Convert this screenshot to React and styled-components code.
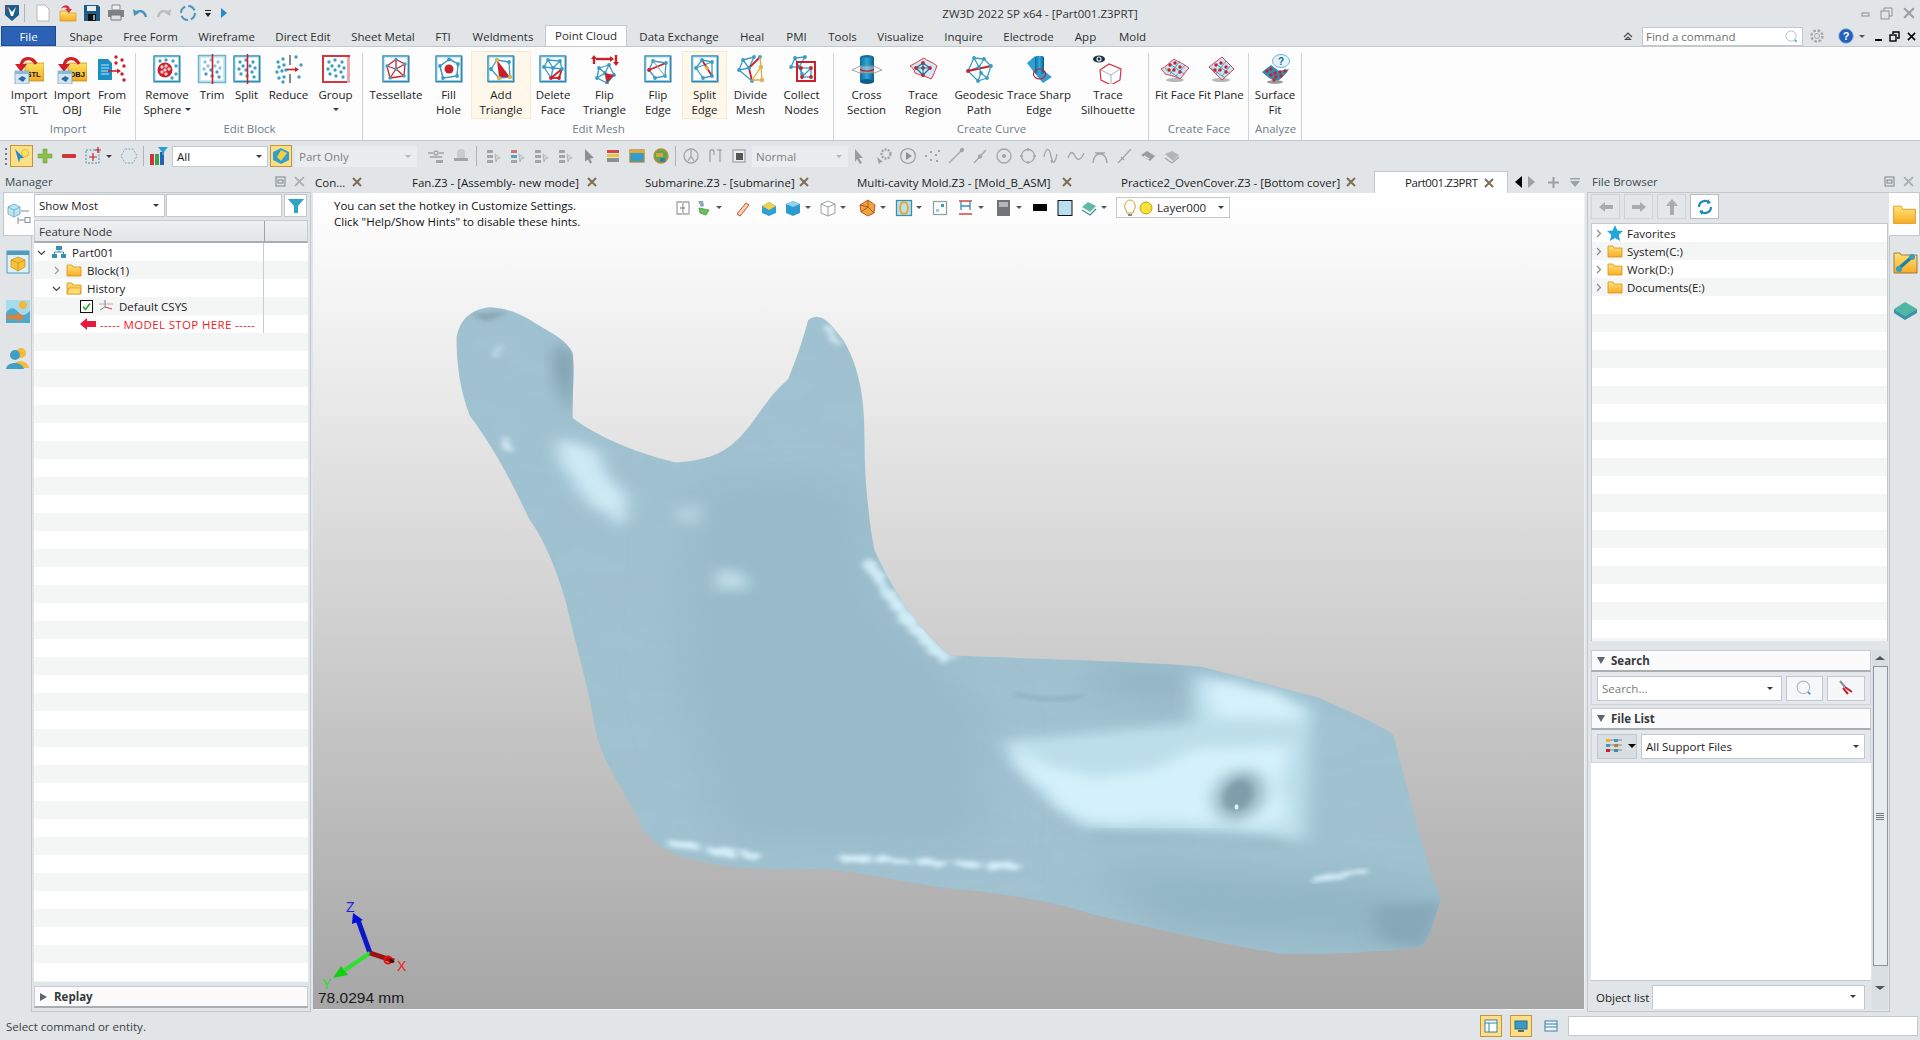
import React from 'react';
import styled, { createGlobalStyle } from 'styled-components';

const FONT = '"Open Sans", "Noto Sans", "Liberation Sans", sans-serif';
const BLUE = '#3a9cc4';
const RED = '#c9202c';
const GREY = '#a2a5a8';

const GlobalStyle = createGlobalStyle`
    html, body { margin: 0; padding: 0; height: 100%; overflow: hidden; }
    body { font-family: ${FONT}; font-size: 11.5px; color: #1c1c1c; background: #e1e5e8; }
    svg { display: block; }
`;

/* ---------- icon helpers ---------- */
function Ico({ s = 30, v = 30, children }) {
    return <svg width={s} height={s} viewBox={`0 0 ${v} ${v}`}>{children}</svg>;
}

function Frame({ c = '#3c8fb3' }) {
    return (
        <>
            <rect x="1.5" y="1.5" width="27" height="27" fill="#2f7ea3" />
            <rect x="1.5" y="1.5" width="26" height="26" fill={c} />
            <rect x="3" y="3" width="23.5" height="23.5" fill="#fff" stroke="#8ed3ea" />
        </>
    );
}

function Net({ p, e = [], hot = [], c = BLUE, r = 1.9, hotNodes = [] }) {
    return (
        <>
            {e.map(([a, b], i) => <line key={i} x1={p[a][0]} y1={p[a][1]} x2={p[b][0]} y2={p[b][1]} stroke={c} strokeWidth="1.3" />)}
            {hot.map(([a, b], i) => <line key={i} x1={p[a][0]} y1={p[a][1]} x2={p[b][0]} y2={p[b][1]} stroke={RED} strokeWidth="1.8" />)}
            {p.map(([x, y], i) => <circle key={i} cx={x} cy={y} r={r} fill={hotNodes.includes(i) ? RED : c} />)}
        </>
    );
}

function Dots({ p, c = '#3f9fc6' }) {
    return p.map(([x, y], i) => <circle key={i} cx={x} cy={y} r="1.7" fill={c} />);
}

const PENTA = [[15, 5.5], [24, 10], [23, 22], [9, 24], [6, 12], [15, 15]];
const PE = [[0, 1], [1, 2], [2, 3], [3, 4], [4, 0], [0, 5], [1, 5], [2, 5], [3, 5], [4, 5]];
const CLOUD = [[8, 8], [14, 6], [21, 8], [11, 12], [18, 12], [23, 14], [7, 15], [14, 16], [20, 18], [9, 20], [15, 22], [22, 23]];

function Folder({ s = 16, open }) {
    return (
        <svg width={s} height={s} viewBox="0 0 16 16">
            <path d="M1 3h5l1 2h8v9H1z" fill="url(#gFolder)" stroke="#d98f17" strokeWidth=".8" />
            {open && <path d="M1 14l2-6h12l-1 6z" fill="#ffdc72" stroke="#d98f17" strokeWidth=".6" />}
        </svg>
    );
}

const ImportBase = ({ label }) => (
    <Ico>
        <rect x="11" y="9" width="19" height="18" fill="url(#gGold)" stroke="#b98a12" strokeWidth=".7" />
        <text x="12.5" y="23" fontSize="7.5" fontWeight="700" fontFamily="Liberation Sans" fill="#111">{label}</text>
        <path d="M22 10C18 2 8 3 7 12" stroke="#d01f26" strokeWidth="3.2" fill="none" />
        <path d="M1 10h12l-6 8z" fill="#d01f26" />
        <rect x="1" y="17" width="14" height="13" fill="#d5e6f3" stroke="#6e97b5" strokeWidth=".7" />
        <rect x="1" y="17" width="14" height="3" fill="#8ab9da" />
        <path d="M4 25l4-3 4 2-3 4z" fill="#2f6ea3" />
    </Ico>
);
const ImportStl = () => <ImportBase label="STL" />;
const ImportObj = () => <ImportBase label="OBJ" />;
const FromFile = () => (
    <Ico>
        <path d="M1 5h10l4 4v17H1z" fill="#1b8fc4" />
        <path d="M4 11h8M4 14h8M4 17h7M4 20h8" stroke="#bfe6f5" />
        <path d="M11 17h12" stroke={RED} strokeWidth="1.6" />
        <path d="M20 14.5l4 2.5-4 2.5z" fill={RED} />
        <Dots c={RED} p={[[19, 3], [25, 6], [27, 12], [25, 20], [27, 26], [19, 9]]} />
    </Ico>
);
const RemoveSphere = () => (
    <Ico>
        <Frame />
        <Dots p={[[8, 7], [14, 6], [21, 7], [24, 12], [24, 20], [20, 24]]} />
        <circle cx="13" cy="16" r="7.5" fill={RED} />
        <Dots c="#f4c9c9" p={[[10, 13], [14, 12], [17, 15], [10, 18], [14, 20], [13, 16]]} />
    </Ico>
);
const Trim = () => (
    <Ico>
        <rect x="1.5" y="1.5" width="27" height="27" fill="#cfe8f1" stroke="#6fb4cf" strokeWidth="1.5" />
        <rect x="4" y="4" width="22" height="22" fill="#fff" />
        <Dots c="#8cc4dc" p={CLOUD.slice(0, 7)} />
        <Dots p={CLOUD.slice(7)} />
        <path d="M15.5 0v30" stroke={RED} strokeWidth="1.6" />
    </Ico>
);
const Split = () => (
    <Ico>
        <Frame />
        <Dots p={CLOUD} />
        <path d="M15.5 0v30" stroke={RED} strokeWidth="1.6" />
    </Ico>
);
const Reduce = () => (
    <Ico>
        <Dots p={[[4, 8], [9, 5], [5, 13], [10, 11], [3, 18], [8, 17], [12, 16], [5, 24], [10, 23], [9, 28], [22, 3], [27, 11], [25, 23]]} />
        <path d="M16 1v10M16 20v9" stroke="#6b6b6b" strokeWidth="1.6" />
        <path d="M13 15.5h10" stroke={RED} strokeWidth="1.6" />
        <path d="M21 13l4 2.5-4 2.5z" fill={RED} />
    </Ico>
);
const Group = () => (
    <Ico>
        <rect x="2" y="2" width="26" height="26" fill="#fff" stroke="#d2363f" strokeWidth="2" />
        <rect x="26" y="3" width="3" height="26" fill="#e9a9ac" />
        <Dots p={CLOUD} />
    </Ico>
);
const Tessellate = () => (
    <Ico>
        <Frame />
        <Net p={PENTA} c={RED} e={PE} r={0} />
        <Dots p={PENTA} />
    </Ico>
);
const FillHole = () => (
    <Ico>
        <Frame />
        <Net p={PENTA} e={PE.slice(0, 5)} />
        <path d="M6 12l9-6.5M24 10l-9-6M6 12l3 12M24 10l-1 12" stroke={BLUE} />
        <circle cx="15" cy="15" r="4.5" fill={RED} />
    </Ico>
);
const AddTriangle = () => (
    <Ico>
        <Frame />
        <Net p={[[11, 6], [23, 8], [24, 23], [13, 24], [5, 15]]} e={[[0, 1], [1, 2], [2, 3], [3, 4], [4, 0]]} hotNodes={[]} />
        <path d="M11 6l13 17H13z" fill={RED} />
        <circle cx="11" cy="6" r="2" fill="#e8b440" /><circle cx="24" cy="23" r="2" fill="#e8b440" /><circle cx="13" cy="24" r="2" fill="#e8b440" />
    </Ico>
);
const DeleteFace = () => (
    <Ico>
        <Frame />
        <Net p={[[10, 6], [22, 7], [24, 15], [21, 24], [13, 24], [6, 13], [15, 14]]} e={[[0, 1], [1, 2], [0, 5], [5, 4], [0, 6], [1, 6], [5, 6], [6, 4], [6, 2]]} hot={[[2, 3], [3, 4], [4, 2]]} hotNodes={[3, 4]} />
    </Ico>
);
const FlipTriangle = () => (
    <Ico>
        <path d="M4 10V4" stroke={RED} strokeWidth="2.4" /><path d="M1 5l3-4 3 4z" fill={RED} />
        <path d="M6 5h15" stroke={RED} strokeWidth="2.4" /><path d="M20 2l4 3-4 3z" fill={RED} />
        <path d="M26 1v8" stroke={RED} strokeWidth="2.4" /><path d="M23 8l3 4 3-4z" fill={RED} />
        <Net p={[[9, 14], [19, 11], [24, 21], [17, 29], [7, 24], [15, 19]]} e={[[0, 1], [1, 2], [2, 3], [3, 4], [4, 0], [0, 5], [1, 5], [4, 5], [3, 5]]} />
        <path d="M15 19l9 2-7 8z" fill={RED} />
    </Ico>
);
const FlipEdge = () => (
    <Ico>
        <Frame />
        <Net p={[[10, 7], [23, 9], [22, 22], [12, 24], [6, 16]]} e={[[0, 1], [1, 2], [2, 3], [3, 4], [4, 0]]} hot={[[1, 4]]} hotNodes={[4]} />
        <path d="M10 7l12 15" stroke="#a6a6a6" strokeWidth="1.2" />
    </Ico>
);
const SplitEdge = () => (
    <Ico>
        <Frame />
        <Net p={[[12, 6], [22, 8], [22, 22], [13, 24], [6, 14]]} e={[[0, 1], [1, 2], [2, 3], [3, 4], [4, 0], [4, 1]]} hot={[[0, 2]]} />
        <circle cx="17" cy="14" r="2" fill="#e8b440" />
    </Ico>
);
const DivideMesh = () => (
    <Ico>
        <Net p={[[7, 6], [18, 3], [25, 13], [16, 27], [3, 16], [13, 14], [26, 26], [24, 3]]} e={[[0, 1], [0, 4], [4, 3], [0, 5], [4, 5], [1, 5]]} hot={[[7, 5], [5, 3]]} />
        <path d="M24 3l1 10 1 13H16l9-13" stroke="#e0a93a" strokeWidth="1.3" fill="none" />
        <circle cx="25" cy="13" r="2" fill="#e8b440" /><circle cx="26" cy="26" r="2" fill="#e8b440" />
    </Ico>
);
const CollectNodes = () => (
    <Ico>
        <Net p={[[8, 4], [18, 3], [4, 13], [12, 13], [15, 20]]} e={[[0, 1], [0, 2], [2, 3], [0, 3], [1, 3], [3, 4]]} />
        <rect x="10" y="8" width="18" height="19" fill="none" stroke={RED} strokeWidth="2" />
        <Net p={[[14, 14], [24, 14], [15, 23], [24, 23]]} e={[[0, 1], [1, 3], [2, 3], [0, 2], [1, 2]]} hotNodes={[0, 1, 2, 3]} />
    </Ico>
);
const CrossSection = () => (
    <Ico>
        <ellipse cx="15" cy="3.5" rx="7" ry="2.5" fill="#1a6f9a" />
        <rect x="8" y="3.5" width="14" height="24" fill="url(#gCyl)" />
        <ellipse cx="15" cy="27.5" rx="7" ry="2.5" fill="#0c5f8b" />
        <path d="M0 16L8 12h14l8 4-8 3H8z" fill="#fff" fillOpacity=".35" stroke="#8b8b8b" strokeWidth=".8" />
        <path d="M8 15.5c4 2 10 2 14 0" stroke={RED} strokeWidth="1.4" fill="none" />
    </Ico>
);
const TraceRegion = () => (
    <Ico>
        <path d="M2 12C8 9 12 6 16 4c3 3 9 4 13 8-2 4-3 9-6 13-5-3-12-4-16-6C6 15 4 13 2 12z" fill="#cfeaf5" stroke="#e8333c" strokeWidth="1" />
        <Net p={[[15, 9], [22, 14], [15, 21], [8, 14], [15, 14]]} e={[[0, 1], [1, 2], [2, 3], [3, 0]]} c="#226f96" hotNodes={[0, 1, 2, 3, 4]} />
        <path d="M15 9v12M8 14h14" stroke="#226f96" />
    </Ico>
);
const Geodesic = () => (
    <Ico>
        <Net p={[[10, 4], [20, 5], [27, 12], [23, 24], [14, 27], [4, 17], [15, 13], [17, 19]]} e={[[0, 1], [1, 2], [2, 3], [3, 4], [4, 5], [5, 0], [0, 6], [1, 6], [6, 5], [6, 7], [7, 3], [7, 4]]} hot={[[5, 2]]} hotNodes={[5]} />
    </Ico>
);
const TraceSharp = () => (
    <Ico>
        <path d="M3 9l8-7c5 8 7 14 17 21l-9 6C13 22 8 16 3 9z" fill="#2d9fd0" />
        <rect x="11" y="2" width="9" height="18" fill="url(#gCyl)" rx="2" />
        <ellipse cx="15.5" cy="20" rx="6" ry="5" fill="none" stroke={RED} strokeWidth="1.2" />
    </Ico>
);
const TraceSilhouette = () => (
    <Ico>
        <ellipse cx="6" cy="5" rx="6" ry="3.6" fill="#16323f" />
        <ellipse cx="6" cy="5" rx="2.6" ry="2.6" fill="#e8f0f4" />
        <circle cx="6" cy="5" r="1.4" fill="#16323f" />
        <path d="M7 16l9-6 12 5-1 11-9 5-10-5z" fill="#fff" stroke="#d8323c" strokeWidth="1.2" />
        <path d="M8 16l10 5 9-6M18 21v9" stroke="#9bb2bf" strokeWidth="1" fill="none" />
    </Ico>
);
function Patch({ p }) {
    return (
        <Ico>
            <ellipse cx="15" cy="26" rx="9" ry="2" fill="#8a8a8a" opacity=".6" />
            <path d={p} fill="#c6e3f0" stroke="#ec3b44" strokeWidth="1" />
            <path d="M5 14l14 10M10 10l14 10M20 7L10 20M25 11l-9 11" stroke="#2f7fa6" strokeWidth=".7" />
            <Dots c={RED} p={[[10, 11], [15, 9], [20, 13], [14, 16], [20, 18], [9, 16]]} />
        </Ico>
    );
}
const FitFace = () => <Patch p="M1 15C6 13 10 8 14 5c4 3 9 4 15 9-4 4-6 8-9 11-5-3-12-4-15-5-1-2-3-4-4-5z" />;
const FitPlane = () => <Patch p="M3 13L16 3l12 12-12 11z" />;
const SurfaceFit = () => (
    <Ico>
        <ellipse cx="21" cy="7" rx="8.5" ry="6.5" fill="#e4f1f7" stroke="#6fb4cf" />
        <path d="M2 18l9-7 8 6 10-2c-2 4-6 8-11 12-6 0-12-5-16-9z" fill="#2d8fb5" />
        <ellipse cx="15" cy="28" rx="8" ry="1.8" fill="#999" />
        <Dots c={RED} p={[[7, 17], [11, 15], [15, 19], [20, 18], [25, 17], [11, 21], [16, 23], [21, 22], [14, 26]]} />
        <text x="18" y="11" fontSize="10" fontWeight="700" fontFamily="Liberation Sans" fill="#1d6f98">?</text>
    </Ico>
);

/* small toolbar glyphs */
function G({ children, s = 18 }) {
    return <svg width={s} height={s} viewBox="0 0 18 18" fill="none" stroke={GREY} strokeWidth="1.3">{children}</svg>;
}
const GREY_ICONS = {
    link: <G><path d="M1 6h5M12 6h5M3 10h12" /><circle cx="9" cy="6" r="2" /><path d="M9 13h7v3H9z" fill={GREY} stroke="none" /></G>,
    stamp: <G><path d="M5 11V6a4 4 0 018 0v5z" fill="#c9cccf" stroke="none" /><path d="M2 11h14v3H2z" fill={GREY} stroke="none" /></G>,
    list1: <G><path d="M3 3h6v3H3zM3 8h6v3H3zM3 13h6v3H3z" fill={GREY} stroke="none" /><path d="M11 7l5 4-3 1-1 3z" fill="#d8dadc" stroke={GREY} strokeWidth=".7" /></G>,
    list2: <G><path d="M3 3h6v3H3z" fill="#c77" stroke="none" /><path d="M3 8h6v3H3z" fill="#5a9fc0" stroke="none" /><path d="M3 13h6v3H3z" fill={GREY} stroke="none" /><path d="M11 7l5 4-3 1-1 3z" fill="#d8dadc" stroke={GREY} strokeWidth=".7" /></G>,
    cursor: <G><path d="M5 2l9 9-4 .5 2 4-2 1-2-4-3 2z" fill="#8d9093" stroke="none" /></G>,
    stack: <G><path d="M3 3h12v3H3z" fill="#d8453e" stroke="none" /><path d="M3 7h12v3H3z" fill="#e9c43f" stroke="none" /><path d="M3 11h12v4H3z" fill="#8d9093" stroke="none" /></G>,
    card: <G><rect x="2" y="3" width="14" height="12" fill="#2f9fd0" stroke="#b8872a" /><path d="M2 3h14v3H2z" fill="#e9a63f" stroke="none" /></G>,
    globe: <G><circle cx="9" cy="9" r="7" fill="#5aa75a" stroke="#c58a2a" /><path d="M4 6h7v4H4z" fill="#d9a23a" stroke="none" /><path d="M8 11h5v4H8z" fill="#2f7fa6" stroke="none" /></G>,
    clock: <G><circle cx="9" cy="9" r="7" /><path d="M9 3v6l-3 5M9 9l3 5" /></G>,
    hook: <G><path d="M4 15V5c0-3 4-3 4 0v3M14 15V3" /><path d="M11 3h5" /></G>,
    stop: <G><rect x="3" y="3" width="12" height="12" fill="#eee" /><rect x="6" y="6" width="7" height="7" fill="#555" stroke="none" /></G>,
    arrow: <G><path d="M4 2l8 9-4 0 3 5-2 1-3-5-2 3z" fill="#9a9da0" stroke="none" /></G>,
    gear: <G><circle cx="11" cy="7" r="4.5" strokeDasharray="2 1.2" strokeWidth="2.4" /><path d="M2 10l6 5-3 .5-1 2z" fill="#9a9da0" stroke="none" /></G>,
    play: <G><circle cx="9" cy="9" r="7.4" /><path d="M7 5l6 4-6 4z" fill="#8d9093" stroke="none" /></G>,
    points: <G><path d="M2 9h2M7 5h2M7 13h2M12 8h2M15 4h2M13 14h2" strokeWidth="1.8" /></G>,
    lineA: <G><path d="M2 16L15 3" /><circle cx="15" cy="3" r="1.5" fill={GREY} /></G>,
    lineB: <G><path d="M3 16L15 3" /><circle cx="9" cy="9.5" r="1.5" fill={GREY} /></G>,
    circleDot: <G><circle cx="9" cy="9" r="7" /><circle cx="9" cy="9" r="1.4" fill={GREY} /></G>,
    circlePts: <G><circle cx="9" cy="9" r="6.5" /><path d="M9 1v3M9 14v3M1 9h3M14 9h3" /></G>,
    wave: <G><path d="M1 10c2-10 5-10 7-1s4 8 6-2" /><path d="M8 13l1 3" /></G>,
    wave2: <G><path d="M1 11c3-8 5-6 7-2s5 6 9-3" /></G>,
    arch: <G><path d="M2 16c0-12 14-12 14 0M4 6h10" /></G>,
    lineC: <G><path d="M3 16L16 2" /><path d="M6 10l3 3" /></G>,
    solidA: <G><path d="M2 8l6-4 8 5-5 5z" fill="#9a9da0" stroke="none" /><path d="M5 9l5 3" stroke="#eee" /></G>,
    solidB: <G><path d="M2 7l7-3 7 4-6 6z" fill="#b2b5b8" stroke="none" /><path d="M2 11l7 5 7-6" /></G>,
};

/* ---------- layout ---------- */
const Shell = styled.div`
    width: 1920px;
    height: 1040px;
    display: flex;
    flex-direction: column;
    overflow: hidden;
    position: relative;
    background: #e1e5e8;
`;
const DefsSvg = styled.svg`
    position: absolute;
    width: 0;
    height: 0;
`;
const TitleRow = styled.div`
    height: 26px;
    display: flex;
    align-items: center;
    position: relative;
`;
const Quick = styled.div`
    display: flex;
    align-items: center;
`;
const QuickSlot = styled.div`
    width: ${p => p.$w || 24}px;
    margin-left: ${p => p.$ml || 0}px;
    display: flex;
    justify-content: center;
    align-items: center;
`;
const VBar = styled.div`
    width: 1px;
    height: ${p => p.$h || 18}px;
    margin-left: ${p => p.$ml || 0}px;
    background: #aeb4b8;
    flex: none;
`;
const AppTitle = styled.div`
    position: absolute;
    left: 0;
    right: 0;
    text-align: center;
    padding-left: 160px;
    box-sizing: border-box;
    color: #333;
`;
const WinTop = styled.div`
    margin-left: auto;
    display: flex;
    align-items: center;
    gap: 10px;
    padding-right: 5px;
`;
const MenuRow = styled.div`
    height: 20px;
    display: flex;
    align-items: flex-end;
    position: relative;
    z-index: 2;
`;
const FileTab = styled.div`
    width: 55px;
    height: 20px;
    margin-left: 1px;
    margin-right: 3px;
    box-sizing: border-box;
    background: #2b62b5;
    border: 1px solid #1c4a93;
    color: #fff;
    display: flex;
    align-items: center;
    justify-content: center;
`;
const MenuTab = styled.div`
    width: ${p => p.$w}px;
    height: ${p => (p.$active ? 21 : 20)}px;
    margin-left: ${p => p.$ml || 0}px;
    box-sizing: border-box;
    color: #2f2f2f;
    white-space: nowrap;
    display: flex;
    align-items: center;
    justify-content: center;
    padding-bottom: 1px;
    background: ${p => (p.$active ? '#fdfdfd' : 'transparent')};
    border: ${p => (p.$active ? '1px solid #c3c8cc' : '1px solid transparent')};
    border-bottom: none;
`;
const MenuRight = styled.div`
    margin-left: auto;
    height: 20px;
    display: flex;
    align-items: center;
    padding-right: 3px;
`;
const FindBox = styled.div`
    width: 161px;
    height: 19px;
    margin: 0 6px 0 9px;
    box-sizing: border-box;
    background: #fff;
    border: 1px solid #c3c8cc;
    color: #6f6f6f;
    display: flex;
    align-items: center;
    justify-content: space-between;
    padding: 0 4px 0 3px;
`;
const Ribbon = styled.div`
    height: 95px;
    box-sizing: border-box;
    background: #fdfdfd;
    border-top: 1px solid #c3c8cc;
    border-bottom: 1px solid #c3c8cc;
    display: flex;
`;
const RGroup = styled.div`
    width: ${p => p.$w}px;
    box-sizing: border-box;
    flex: none;
    display: flex;
    flex-direction: column;
    padding: 4px 0 0 ${p => p.$pl}px;
    position: relative;
    &::after {
        content: '';
        position: absolute;
        right: 0;
        top: 6px;
        bottom: 0;
        width: 1px;
        background: #d0d4d8;
    }
`;
const RItems = styled.div`
    display: flex;
    height: 68px;
`;
const RButton = styled.div`
    width: ${p => p.$w}px;
    flex: none;
    box-sizing: border-box;
    display: flex;
    flex-direction: column;
    align-items: center;
    padding-top: 1px;
    color: #222;
    line-height: 15px;
    white-space: nowrap;
    background: ${p => (p.$hot ? '#fff8ea' : 'transparent')};
    border: 1px solid ${p => (p.$hot ? '#f6ebcf' : 'transparent')};
`;
const RIcon = styled.div`
    height: 31px;
    margin-bottom: 3px;
    display: flex;
    align-items: center;
    justify-content: center;
`;
const RLine = styled.div`
    display: flex;
    align-items: center;
    gap: 3px;
    height: 15px;
`;
const RLabel = styled.div`
    text-align: center;
    color: #6d7f8c;
    margin-left: -${p => p.$pl}px;
    line-height: 16px;
    margin-top: 2px;
`;
const Caret = styled.span`
    display: inline-block;
    width: 0;
    height: 0;
    flex: none;
    border-left: ${p => p.$s || 3}px solid transparent;
    border-right: ${p => p.$s || 3}px solid transparent;
    border-top: ${p => p.$s || 3}px solid ${p => p.$c || '#3a3a3a'};
`;
const Toolbar = styled.div`
    height: 30px;
    display: flex;
    align-items: center;
    padding-left: 4px;
`;
const Grip = styled.div`
    width: 2px;
    height: 17px;
    margin-left: 1px;
    margin-right: 1px;
    background: repeating-linear-gradient(#6f7a82 0 2px, transparent 2px 5px);
`;
const Slot = styled.div`
    width: ${p => p.$w || 24}px;
    margin-left: ${p => p.$ml || 0}px;
    flex: none;
    display: flex;
    align-items: center;
    justify-content: center;
`;
const HotButton = styled.div`
    width: ${p => p.$w}px;
    height: 22px;
    margin-left: ${p => p.$ml || 0}px;
    flex: none;
    box-sizing: border-box;
    background: #ffdf85;
    border: 1px solid #c2953d;
    display: flex;
    align-items: center;
    justify-content: center;
`;
const Select = styled.div`
    width: ${p => p.$w}px;
    height: ${p => p.$h || 21}px;
    margin-left: ${p => p.$ml || 0}px;
    flex: none;
    box-sizing: border-box;
    background: ${p => (p.$off ? '#eaedef' : '#fff')};
    border: 1px solid ${p => (p.$off ? '#eaedef' : '#c3c8cc')};
    color: ${p => (p.$off ? '#7c7f82' : '#1c1c1c')};
    display: flex;
    align-items: center;
    justify-content: space-between;
    padding: 0 5px 0 ${p => (p.$off ? 3 : 4)}px;
`;
const Workspace = styled.div`
    flex: 1;
    min-height: 0;
    display: flex;
`;
const LeftDock = styled.div`
    width: 311px;
    flex: none;
    box-sizing: border-box;
    display: flex;
    flex-direction: column;
    padding-bottom: 28px;
`;
const DockHead = styled.div`
    height: 21px;
    flex: none;
    display: flex;
    align-items: center;
    justify-content: space-between;
    padding: 0 ${p => p.$pr || 6}px 0 ${p => p.$pl || 5}px;
    color: #40494f;
    font-size: 11.5px;
`;
const DockTools = styled.div`
    display: flex;
    align-items: center;
    gap: 8px;
`;
const DockBody = styled.div`
    flex: 1;
    min-height: 0;
    display: flex;
    padding-left: ${p => p.$pl || 0}px;
`;
const Rail = styled.div`
    width: 30px;
    flex: none;
    display: flex;
    flex-direction: column;
    position: relative;
    z-index: 1;
`;
const RailTab = styled.div`
    height: ${p => p.$h || 48}px;
    box-sizing: border-box;
    display: flex;
    align-items: center;
    justify-content: center;
    ${p => p.$active && `
        background: #fdfdfd;
        border: 1px solid #c3c8cc;
        ${p.$side === 'right' ? 'border-left: 1px solid #fdfdfd; margin-left: -1px;' : 'border-right: 1px solid #fdfdfd; margin-right: -1px;'}
        height: 44px;
    `}
`;
const Panel = styled.div`
    flex: 1;
    min-width: 0;
    box-sizing: border-box;
    margin-left: -2px;
    background: #e1e5e8;
    border: 1px solid #c3c8cc;
    padding: 1px 2px 3px;
    display: flex;
    flex-direction: column;
`;
const FilterRow = styled.div`
    height: 23px;
    flex: none;
    display: flex;
    gap: 1px;
    margin-bottom: 3px;
`;
const FilterBtn = styled.div`
    width: 23px;
    margin-left: 1px;
    box-sizing: border-box;
    background: #fff;
    border: 1px solid #c3c8cc;
    display: flex;
    align-items: center;
    justify-content: center;
`;
const TreeHead = styled.div`
    height: 23px;
    flex: none;
    display: flex;
    box-sizing: border-box;
    background: linear-gradient(#eef0f2, #e3e6e9);
    border: 1px solid #c8ccd0;
    border-bottom: 2px solid #a9aeb3;
`;
const HeadCell = styled.div`
    width: 230px;
    box-sizing: border-box;
    padding-left: 4px;
    border-right: 1px solid #9fa4a9;
    display: flex;
    align-items: center;
    color: #333;
`;
const TreeBody = styled.div`
    flex: 1;
    min-height: 0;
    background: repeating-linear-gradient(#fff 0 18px, #f4f5f5 18px 36px);
`;
const TreeRow = styled.div`
    height: 18px;
    width: ${p => p.$w || 230}px;
    box-sizing: border-box;
    display: flex;
    align-items: center;
    padding-left: ${p => p.$pl || 0}px;
    gap: ${p => p.$gap || 3}px;
    white-space: nowrap;
    border-right: ${p => (p.$line ? '1px solid #c8ccd0' : 'none')};
    color: ${p => p.$c || '#1c1c1c'};
    letter-spacing: ${p => p.$ls || 0}px;
`;
const Replay = styled.div`
    height: 22px;
    flex: none;
    margin-top: 4px;
    box-sizing: border-box;
    background: #fbfbfb;
    border: 1px solid #c8ccd0;
    border-bottom: 2px solid #a9aeb3;
    display: flex;
    align-items: center;
    gap: 7px;
    padding-left: 5px;
    font-weight: 700;
    color: #37393b;
`;
const SideTri = styled.span`
    width: 0;
    height: 0;
    border-top: 4px solid transparent;
    border-bottom: 4px solid transparent;
    border-left: 7px solid #5f656a;
`;
const DownTri = styled.span`
    width: 0;
    height: 0;
    border-left: 4px solid transparent;
    border-right: 4px solid transparent;
    border-top: 7px solid #5f656a;
`;
const Center = styled.div`
    width: 1272px;
    flex: none;
    margin-left: 2px;
    display: flex;
    flex-direction: column;
    padding-bottom: 30px;
`;
const TabStrip = styled.div`
    height: 22px;
    flex: none;
    display: flex;
    align-items: flex-end;
    position: relative;
`;
const DocTab = styled.div`
    width: ${p => p.$w}px;
    height: 22px;
    flex: none;
    box-sizing: border-box;
    display: flex;
    align-items: center;
    justify-content: space-between;
    padding: 0 ${p => p.$pr}px 0 ${p => p.$pl}px;
    white-space: nowrap;
    letter-spacing: ${p => (p.$active ? '-.45px' : 0)};
    background: ${p => (p.$active ? '#fff' : 'transparent')};
    border: ${p => (p.$active ? '1px solid #c3c8cc' : 'none')};
    border-bottom: none;
`;
const TabNav = styled.div`
    display: flex;
    align-items: center;
    height: 22px;
    padding-left: 7px;
    gap: 6px;
`;
const Viewport = styled.div`
    flex: 1;
    min-height: 0;
    position: relative;
    overflow: hidden;
    background: linear-gradient(#ffffff 0%, #a6a6a6 100%);
    border-bottom: 1px solid #f3f3f3;
    border-right: 1px solid #f0f0f0;
`;
const Hint = styled.div`
    position: absolute;
    left: 21px;
    top: 5px;
    line-height: 16px;
    color: #111;
`;
const ViewTools = styled.div`
    position: absolute;
    left: 361px;
    top: 4px;
    display: flex;
    align-items: center;
`;
const ViewSlot = styled.div`
    width: ${p => p.$w}px;
    flex: none;
    display: flex;
    align-items: center;
    gap: 3px;
`;
const LayerBox = styled.div`
    width: 114px;
    height: 21px;
    margin-left: 0;
    box-sizing: border-box;
    background: #fff;
    border: 1px solid #c3c8cc;
    display: flex;
    align-items: center;
    gap: 2px;
    padding: 0 5px 0 6px;
`;
const LayerName = styled.span`
    flex: 1;
    margin-left: 2px;
`;
const JawSvg = styled.svg`
    position: absolute;
    left: 117px;
    top: 97px;
`;
const Triad = styled.svg`
    position: absolute;
    left: 7px;
    top: 707px;
`;
const Scale = styled.div`
    position: absolute;
    left: 5px;
    top: 796px;
    font-family: "Liberation Sans", Arial, sans-serif;
    font-size: 15.5px;
    color: #1a1a1a;
`;
const RightDock = styled.div`
    flex: 1;
    margin-left: 2px;
    display: flex;
    flex-direction: column;
    padding-bottom: 28px;
`;
const RightPanel = styled.div`
    width: 303px;
    flex: none;
    box-sizing: border-box;
    border: 1px solid #c3c8cc;
    padding: 1px 1px 2px 3px;
    display: flex;
    flex-direction: column;
`;
const NavRow = styled.div`
    height: 25px;
    flex: none;
    display: flex;
    gap: 4px;
    margin-bottom: 4px;
`;
const NavBtn = styled.div`
    width: 29px;
    box-sizing: border-box;
    border: 1px solid #cfd3d6;
    background: ${p => (p.$on ? '#fff' : '#e4e7ea')};
    ${p => p.$on && 'border-color: #b7bcc0;'}
    display: flex;
    align-items: center;
    justify-content: center;
`;
const FileTree = styled.div`
    height: 418px;
    flex: none;
    box-sizing: border-box;
    background: repeating-linear-gradient(#fff 0 18px, #f4f5f5 18px 36px);
    border-top: 1px solid #c3c8cc;
    border-left: 1px solid #c3c8cc;
    border-right: 1px solid #c3c8cc;
`;
const Lower = styled.div`
    flex: 1;
    min-height: 0;
    display: flex;
    margin-top: 9px;
    gap: 1px;
`;
const LowerCol = styled.div`
    width: 280px;
    flex: none;
    display: flex;
    flex-direction: column;
`;
const SectionHead = styled.div`
    height: 22px;
    flex: none;
    box-sizing: border-box;
    background: #fbfbfb;
    border: 1px solid #c8ccd0;
    border-bottom: 2px solid #a9aeb3;
    display: flex;
    align-items: center;
    gap: 6px;
    padding-left: 5px;
    font-weight: 700;
    color: #37393b;
`;
const SectionBody = styled.div`
    height: ${p => p.$h}px;
    flex: none;
    box-sizing: border-box;
    display: flex;
    align-items: center;
    gap: 4px;
    padding: 0 5px;
    margin-bottom: ${p => p.$mb || 0}px;
    background: #e4e8ec;
    border: 1px solid #d0d4d8;
    border-top: none;
`;
const SearchBox = styled.div`
    width: 186px;
    height: 25px;
    box-sizing: border-box;
    background: #fff;
    border: 1px solid #c3c8cc;
    color: #7a7a7a;
    display: flex;
    align-items: center;
    justify-content: space-between;
    padding: 0 8px 0 4px;
`;
const SquareBtn = styled.div`
    width: 38px;
    height: 25px;
    box-sizing: border-box;
    background: #f6f7f8;
    border: 1px solid #c3c8cc;
    display: flex;
    align-items: center;
    justify-content: center;
`;
const ViewPicker = styled.div`
    width: 42px;
    height: 25px;
    box-sizing: border-box;
    background: #d9dee3;
    border: 1px solid #c3c8cc;
    display: flex;
    align-items: center;
    gap: 5px;
    padding-left: 7px;
`;
const ListArea = styled.div`
    flex: 1;
    min-height: 0;
    background: #fff;
    border-bottom: 1px solid #c3c8cc;
`;
const ObjectRow = styled.div`
    height: 28px;
    flex: none;
    display: flex;
    align-items: flex-end;
    padding-left: 5px;
`;
const ObjectLabel = styled.span`
    width: 56px;
    line-height: 22px;
`;
const ObjectSel = styled.div`
    width: 213px;
    height: 24px;
    box-sizing: border-box;
    background: #fff;
    border: 1px solid #c3c8cc;
    border-bottom: none;
    display: flex;
    align-items: flex-start;
    justify-content: flex-end;
    padding: 9px 8px 0 0;
`;
const ScrollBar = styled.div`
    width: 16px;
    flex: none;
    background: #d9dee3;
    display: flex;
    flex-direction: column;
    align-items: center;
`;
const ScrollEnd = styled.div`
    height: ${p => p.$h}px;
    flex: none;
    display: flex;
    align-items: center;
`;
const UpTri = styled.span`
    width: 0;
    height: 0;
    border-left: 5px solid transparent;
    border-right: 5px solid transparent;
    border-bottom: 4px solid #4f5559;
`;
const DownBig = styled.span`
    width: 0;
    height: 0;
    border-left: 5px solid transparent;
    border-right: 5px solid transparent;
    border-top: 4px solid #4f5559;
`;
const ScrollThumb = styled.div`
    width: 15px;
    height: 300px;
    flex: none;
    box-sizing: border-box;
    background: #e9ecef;
    border: 1px solid #8d969d;
    display: flex;
    align-items: center;
    justify-content: center;
`;
const ThumbGrip = styled.div`
    width: 8px;
    height: 7px;
    background: repeating-linear-gradient(#6f7a82 0 1px, transparent 1px 2px);
`;
const StatusBar = styled.div`
    position: absolute;
    left: 0;
    right: 0;
    bottom: 0;
    height: 28px;
    display: flex;
    align-items: center;
    padding: 0 2px 0 6px;
    color: #3b4043;
`;
const StatusIcons = styled.div`
    margin-left: auto;
    display: flex;
    align-items: center;
    gap: 8px;
`;
const StatusBtn = styled.div`
    width: 22px;
    height: 22px;
    box-sizing: border-box;
    display: flex;
    align-items: center;
    justify-content: center;
    ${p => p.$on && 'background: #ffdf85; border: 1px solid #c2953d;'}
`;
const StatusField = styled.div`
    width: 350px;
    height: 20px;
    margin-left: 6px;
    box-sizing: border-box;
    background: #fff;
    border: 1px solid #c3c8cc;
`;

/* ---------- data ---------- */
const MENU = [
    ['Shape', 54], ['Free Form', 75], ['Wireframe', 77], ['Direct Edit', 76], ['Sheet Metal', 84], ['FTI', 36], ['Weldments', 84],
    ['Point Cloud', 82, true], ['Data Exchange', 100], ['Heal', 46], ['PMI', 43], ['Tools', 49], ['Visualize', 67], ['Inquire', 59], ['Electrode', 71], ['App', 43], ['Mold', 51],
];

const GROUPS = [
    { label: 'Import', w: 136, pl: 8, items: [
        { t: ['Import', 'STL'], w: 42, I: ImportStl }, { t: ['Import', 'OBJ'], w: 44, I: ImportObj }, { t: ['From', 'File'], w: 36, I: FromFile },
    ] },
    { label: 'Edit Block', w: 227, pl: 4, items: [
        { t: ['Remove', 'Sphere'], w: 54, I: RemoveSphere, caret: true }, { t: ['Trim'], w: 36, I: Trim }, { t: ['Split'], w: 33, I: Split }, { t: ['Reduce'], w: 51, I: Reduce }, { t: ['Group', ''], w: 43, I: Group, caret: true },
    ] },
    { label: 'Edit Mesh', w: 471, pl: 3, items: [
        { t: ['Tessellate'], w: 60, I: Tessellate }, { t: ['Fill', 'Hole'], w: 45, I: FillHole }, { t: ['Add', 'Triangle'], w: 60, I: AddTriangle, hot: true }, { t: ['Delete', 'Face'], w: 44, I: DeleteFace },
        { t: ['Flip', 'Triangle'], w: 59, I: FlipTriangle }, { t: ['Flip', 'Edge'], w: 48, I: FlipEdge }, { t: ['Split', 'Edge'], w: 45, I: SplitEdge, hot: true }, { t: ['Divide', 'Mesh'], w: 47, I: DivideMesh }, { t: ['Collect', 'Nodes'], w: 55, I: CollectNodes },
    ] },
    { label: 'Create Curve', w: 315, pl: 4, items: [
        { t: ['Cross', 'Section'], w: 57, I: CrossSection }, { t: ['Trace', 'Region'], w: 56, I: TraceRegion }, { t: ['Geodesic', 'Path'], w: 56, I: Geodesic }, { t: ['Trace Sharp', 'Edge'], w: 64, I: TraceSharp }, { t: ['Trace', 'Silhouette'], w: 74, I: TraceSilhouette },
    ] },
    { label: 'Create Face', w: 100, pl: 2, items: [
        { t: ['Fit Face'], w: 48, I: FitFace }, { t: ['Fit Plane'], w: 44, I: FitPlane },
    ] },
    { label: 'Analyze', w: 53, pl: 4, items: [{ t: ['Surface', 'Fit'], w: 44, I: SurfaceFit }] },
];

const DOC_TABS = [
    { t: 'Con...', w: 59, pl: 2, pr: 10 },
    { t: 'Fan.Z3 - [Assembly- new mode]', w: 234, pl: 40, pr: 9 },
    { t: 'Submarine.Z3 - [submarine]', w: 212, pl: 39, pr: 9 },
    { t: 'Multi-cavity Mold.Z3 - [Mold_B_ASM]', w: 263, pl: 39, pr: 9 },
    { t: 'Practice2_OvenCover.Z3 - [Bottom cover]', w: 293, pl: 40, pr: 18 },
    { t: 'Part001.Z3PRT', w: 134, pl: 30, pr: 13, active: true },
];

/* ---------- small pieces ---------- */
const CloseX = ({ c = '#7d6f55', s = 10, w = 2 }) => (
    <svg width={s} height={s} viewBox="0 0 10 10"><path d="M1 1l8 8M9 1l-8 8" stroke={c} strokeWidth={w} /></svg>
);
const Chevron = ({ open, c = '#444' }) => (
    <svg width="9" height="9" viewBox="0 0 9 9" fill="none" stroke={c} strokeWidth="1.2">
        <path d={open ? 'M1 3l3.5 3.5L8 3' : 'M3 1l3.5 3.5L3 8'} />
    </svg>
);
const Glass = ({ s = 14 }) => (
    <svg width={s} height={s} viewBox="0 0 14 14" fill="none">
        <circle cx="6.5" cy="6.5" r="5.5" stroke="#b8bcbf" />
        <path d="M10.5 10.5l2 2" stroke="#4b9cc0" strokeWidth="1.6" />
    </svg>
);
const DockGlyphs = () => (
    <DockTools>
        <svg width="11" height="11" viewBox="0 0 11 11" fill="none" stroke="#7c8287"><rect x="1" y="1" width="9" height="9" /><rect x="3" y="4" width="5" height="3" /></svg>
        <CloseX c="#a9aeb2" s={11} w={1.6} />
    </DockTools>
);
const Arrow = ({ dir = 'left', c = '#a8acaf' }) => (
    <svg width="16" height="16" viewBox="0 0 16 16">
        {dir === 'left' && <path d="M1 8l6-5v3h8v4H7v3z" fill={c} />}
        {dir === 'right' && <path d="M15 8l-6-5v3H1v4h8v3z" fill={c} />}
        {dir === 'up' && <path d="M8 0l6 7h-4v9H6V7H2z" fill={c} />}
    </svg>
);

const VIEW_TOOLS = [
    { w: 21, g: <G><path d="M8 3H3v12h5M9 3h6v12H9z" /><path d="M6 9h5" stroke="#888" /></G> },
    { w: 39, c: 1, g: <G><path d="M3 2l5 0 1 5-3 1z" fill="#8ab" stroke="none" /><path d="M4 9l10 2-3 5-6-2z" fill="#6cc05a" stroke="#3e9a3e" strokeWidth=".8" /></G> },
    { w: 26, g: <G><path d="M3 15l9-11 3 2-9 11z" fill="#f0d9b0" stroke="#d8453e" strokeWidth="1" /></G> },
    { w: 24, g: <G><path d="M9 3l7 4v7l-7 3-7-3V7z" fill="#30a0d2" stroke="none" /><path d="M9 3l7 4-7 4-7-4z" fill="#f2d04a" stroke="none" /></G> },
    { w: 35, c: 1, g: <G><path d="M9 2l7 3v9l-7 3-7-3V5z" fill="#2d9bd0" stroke="none" /><path d="M9 2l7 3-7 3-7-3z" fill="#8ed3ea" stroke="none" /></G> },
    { w: 40, c: 1, g: <G><path d="M9 2l7 3v9l-7 3-7-3V5zM2 5l7 3 7-3M9 8v9" stroke="#9aa0a5" strokeWidth="1" /></G> },
    { w: 36, c: 1, g: <G><path d="M9 1l7 5-1 8-6 3-7-4-1-7z" fill="#eda43a" stroke="#b2491f" strokeWidth=".9" /><path d="M9 1v7l6 6M9 8L2 13M9 8L1 6" stroke="#b2491f" strokeWidth=".9" /></G> },
    { w: 36, c: 1, g: <G><rect x="1.5" y="1.5" width="15" height="15" fill="#bde0ee" stroke="#3a8db3" /><ellipse cx="9" cy="9" rx="4" ry="6" stroke="#e8a830" strokeWidth="2" /></G> },
    { w: 26, g: <G><rect x="2.5" y="2.5" width="13" height="13" fill="#fff" stroke="#9aa0a5" /><path d="M10 5h3v3h-3z" fill="#3a9cc4" stroke="none" /><path d="M5 10h3v3H5z" fill="#9ccde0" stroke="none" /></G> },
    { w: 38, c: 1, g: <G><path d="M2 2h13M2 15h13" stroke="#d8453e" strokeWidth="1.6" /><path d="M4 2v9M13 2v9M4 7h9" stroke="#3a8db3" /></G> },
    { w: 36, c: 1, g: <G><rect x="2" y="1" width="13" height="16" fill="#707478" stroke="none" /><rect x="4" y="3" width="9" height="5" fill="#b4b8bc" stroke="none" /></G> },
    { w: 25, g: <G><rect x="2" y="5" width="14" height="7" fill="#000" stroke="none" /></G> },
    { w: 24, g: <G><rect x="2" y="1.5" width="14" height="15" fill="#b9dff0" stroke="#111" strokeWidth="1" /></G> },
    { w: 36, c: 1, g: <G><path d="M2 8l6-5 8 4-6 6z" fill="#62b8a8" stroke="none" /><path d="M2 11l8 5 6-6" stroke="#3f8d96" /></G> },
];

const JAW = 'M40 110C45 70 60 45 90 40C120 42 140 60 150 68C170 90 205 110 215 145C218 180 215 230 215 295C250 335 300 370 370 398C410 395 440 380 460 350C490 310 500 260 540 205C555 150 565 100 570 70C585 50 600 65 625 120C650 190 655 260 655 340C655 430 660 520 670 600C700 700 740 790 785 843C900 850 1050 855 1160 868C1220 890 1300 925 1340 940C1390 975 1430 1000 1452 1025C1470 1130 1490 1250 1510 1350L1525 1405C1515 1440 1510 1490 1495 1515C1440 1525 1340 1535 1280 1530C1200 1510 1100 1475 1000 1440C950 1415 900 1400 820 1385C740 1375 680 1350 600 1335C540 1335 500 1340 430 1325C380 1310 340 1290 320 1240C300 1170 260 1090 250 1020C240 920 220 820 205 720C190 640 170 570 150 530C120 430 90 350 60 290C45 230 40 170 40 110Z';

function Jaw() {
    return (
        <JawSvg width="1040" height="680" viewBox="0 0 1568 1568" preserveAspectRatio="none">
            <defs>
                <clipPath id="jawClip"><path d={JAW} /></clipPath>
                <filter id="b4" x="-50%" y="-50%" width="200%" height="200%"><feGaussianBlur stdDeviation="5" /></filter>
                <filter id="b14" x="-50%" y="-50%" width="200%" height="200%"><feGaussianBlur stdDeviation="14" /></filter>
                <filter id="b40" x="-50%" y="-50%" width="200%" height="200%"><feGaussianBlur stdDeviation="40" /></filter>
                <filter id="rough" x="-40%" y="-40%" width="180%" height="180%">
                    <feTurbulence type="fractalNoise" baseFrequency=".02" numOctaves="2" seed="4" result="n" />
                    <feDisplacementMap in="SourceGraphic" in2="n" scale="34" xChannelSelector="R" yChannelSelector="G" />
                    <feGaussianBlur stdDeviation="13" />
                </filter>
                <filter id="roughFine" x="-40%" y="-40%" width="180%" height="180%">
                    <feTurbulence type="fractalNoise" baseFrequency=".05" numOctaves="2" seed="9" result="n" />
                    <feDisplacementMap in="SourceGraphic" in2="n" scale="22" xChannelSelector="R" yChannelSelector="G" />
                    <feGaussianBlur stdDeviation="5" />
                </filter>
                <filter id="mottle" x="0" y="0" width="100%" height="100%">
                    <feTurbulence type="fractalNoise" baseFrequency=".012 .02" numOctaves="4" seed="7" />
                    <feColorMatrix values="0 0 0 0 .35  0 0 0 0 .5  0 0 0 0 .58  1.6 0 0 0 -.62" />
                </filter>
            </defs>
            <path d={JAW} fill="#a0c2d1" />
            <g clipPath="url(#jawClip)">
                <rect width="1568" height="1568" filter="url(#mottle)" opacity=".3" />
                {/* broad soft shading */}
                <path d="M400 440L640 440L670 720L830 960L830 1290L440 1270L380 900Z" fill="#97b9c8" filter="url(#b40)" />
                <path d="M1000 870L1160 870L1140 950L1000 930Z" fill="#8fb0bf" filter="url(#b40)" />
                <path d="M1000 1320L1520 1370L1530 1530L1100 1480Z" fill="#93b6c4" filter="url(#b40)" />
                <path d="M1420 1420L1530 1410L1500 1520L1430 1500Z" fill="#86a8b6" filter="url(#b14)" />
                <path d="M194 120L216 150L216 290L196 230C185 190 185 150 194 120Z" fill="#7d9cab" filter="url(#b14)" />
                <path d="M62 56L120 50L85 72Z" fill="#86a4b2" filter="url(#b4)" />
                {/* highlights */}
                <path d="M860 1040L1150 1000L1150 880L1330 960L1320 1270L990 1240L930 1170Z" fill="#bcdfeb" filter="url(#b14)" />
                <path d="M1170 905C1230 905 1295 940 1315 985L1175 990Z" fill="#d6f1fb" filter="url(#rough)" />
                <path d="M875 1045C925 1085 960 1125 1000 1125C1080 1120 1130 1085 1170 1055L1290 1050L1285 1240C1180 1218 1080 1218 990 1228C935 1170 885 1120 875 1045Z" fill="#d4f1fb" filter="url(#rough)" />
                <path d="M180 340C220 340 260 380 280 440C295 490 300 530 285 545C240 500 200 430 180 340Z" fill="#cfeaf5" filter="url(#rough)" />
                <path d="M660 610C700 700 745 790 790 850L770 860C720 790 680 700 655 640Z" fill="#d0ecf6" filter="url(#roughFine)" />
                <path d="M425 655C450 630 480 650 482 695L430 695Z" fill="#c4e1ec" filter="url(#rough)" />
                <path d="M370 500L410 490L410 540L380 530Z" fill="#b4d3e0" filter="url(#rough)" />
                <path d="M108 130L100 150M110 340L120 370M600 85L615 125" stroke="#dff3fa" strokeWidth="7" filter="url(#roughFine)" />
                <path d="M360 1275L500 1310M620 1310L900 1330" stroke="#d4eef8" strokeWidth="15" filter="url(#roughFine)" strokeDasharray="48 8" />
                <path d="M1330 1360L1410 1340" stroke="#d8f0f9" strokeWidth="12" filter="url(#roughFine)" />
                <path d="M1000 1255C1100 1262 1200 1252 1290 1280" stroke="#8db0be" strokeWidth="12" filter="url(#b14)" fill="none" />
                <path d="M880 930C920 950 960 945 985 935" stroke="#84a4b2" strokeWidth="5" filter="url(#b4)" fill="none" />
                {/* mental foramen */}
                <ellipse cx="1220" cy="1165" rx="36" ry="58" fill="#8eadbb" filter="url(#b14)" transform="rotate(12 1220 1165)" />
                <ellipse cx="1218" cy="1165" rx="20" ry="34" fill="#7f9dab" filter="url(#b4)" transform="rotate(12 1218 1165)" />
                <ellipse cx="1216" cy="1192" rx="3" ry="6" fill="#dff1f7" />
            </g>
        </JawSvg>
    );
}

export default function App() {
    return (
        <Shell>
            <GlobalStyle />
            <DefsSvg>
                <defs>
                    <linearGradient id="gFolder" x1="0" y1="0" x2="0" y2="1"><stop offset="0" stopColor="#ffe27a" /><stop offset="1" stopColor="#f9ad24" /></linearGradient>
                    <linearGradient id="gGold" x1="0" y1="0" x2="0" y2="1"><stop offset="0" stopColor="#ffe264" /><stop offset="1" stopColor="#f3a81e" /></linearGradient>
                    <linearGradient id="gCyl" x1="0" y1="0" x2="1" y2="0"><stop offset="0" stopColor="#0f6c9c" /><stop offset=".5" stopColor="#2fa8d8" /><stop offset="1" stopColor="#0b5c88" /></linearGradient>
                </defs>
            </DefsSvg>

            <TitleRow>
                <Quick>
                    <QuickSlot $w={20} $ml={2}>
                        <svg width="18" height="18" viewBox="0 0 18 18">
                            <path d="M2 1h14v10l-7 6-7-6z" fill="#1f5f8c" />
                            <path d="M5 3l4 5 4-5-3 9H8z" fill="#fff" />
                            <path d="M3 3h2v2H3z" fill="#d8323c" />
                        </svg>
                    </QuickSlot>
                    <VBar $ml={2} />
                    <QuickSlot $ml={6}><svg width="16" height="18" viewBox="0 0 16 18"><path d="M2 1h8l4 4v12H2z" fill="#fff" stroke="#b5b9bc" /></svg></QuickSlot>
                    <QuickSlot $w={25}><svg width="20" height="20" viewBox="0 0 20 20"><path d="M2 8h6l2 2h8v8H2z" fill="url(#gFolder)" stroke="#d98f17" strokeWidth=".7" /><path d="M3 6c2-5 8-5 9 0l2 0-3 4-4-4h2c-1-2-4-2-6 0z" fill="#d8323c" /></svg></QuickSlot>
                    <QuickSlot><svg width="18" height="18" viewBox="0 0 18 18"><path d="M1 1h14l2 2v14H1z" fill="#1f5c85" /><path d="M4 2h9v5H4z" fill="#e9eef2" /><path d="M5 10h8v7H5z" fill="#111" /><path d="M10 11h2v5h-2z" fill="#7fa6bf" /></svg></QuickSlot>
                    <QuickSlot><svg width="18" height="18" viewBox="0 0 18 18"><path d="M5 1h8v5H5z" fill="#eee" stroke="#8a8e92" /><path d="M1 6h16v7H1z" fill="#7c8286" /><path d="M4 11h10v5H4z" fill="#dfe2e4" stroke="#777" /></svg></QuickSlot>
                    <QuickSlot><svg width="16" height="14" viewBox="0 0 16 14" fill="none"><path d="M14 11C12 4 7 4 3 7" stroke="#4a93ba" strokeWidth="2.4" /><path d="M1 3l1 7 5-3z" fill="#4a93ba" /></svg></QuickSlot>
                    <QuickSlot><svg width="16" height="14" viewBox="0 0 16 14" fill="none"><path d="M2 11C4 4 9 4 13 7" stroke="#b9bcbf" strokeWidth="2.4" /><path d="M15 3l-1 7-5-3z" fill="#b9bcbf" /></svg></QuickSlot>
                    <QuickSlot><svg width="18" height="18" viewBox="0 0 18 18" fill="none"><circle cx="9" cy="9" r="7" stroke="#4a93ba" strokeWidth="2" strokeDasharray="8 3" /></svg></QuickSlot>
                    <QuickSlot $w={10} $ml={3}><svg width="8" height="9" viewBox="0 0 8 9"><path d="M1 1h6v1H1z" fill="#222" /><path d="M1 4h6L4 8z" fill="#222" /></svg></QuickSlot>
                    <QuickSlot $w={14} $ml={4}><svg width="8" height="12" viewBox="0 0 8 12"><path d="M1 1l6 5-6 5z" fill="#1f8ad0" /></svg></QuickSlot>
                </Quick>
                <AppTitle>ZW3D 2022 SP x64 - [Part001.Z3PRT]</AppTitle>
                <WinTop>
                    <svg width="9" height="9" viewBox="0 0 9 9" fill="none" stroke="#8c9195"><rect x="1" y="4" width="7" height="3" /></svg>
                    <svg width="13" height="13" viewBox="0 0 13 13" fill="none" stroke="#8c9195"><rect x="1" y="4" width="8" height="8" /><path d="M4 4V1h8v8H9" /></svg>
                    <CloseX c="#9a9fa3" s={12} w={1.8} />
                </WinTop>
            </TitleRow>

            <MenuRow>
                <FileTab>File</FileTab>
                {MENU.map(([t, w, active]) => <MenuTab key={t} $w={w} $active={active} $ml={t === 'Data Exchange' ? 2 : 0}>{t}</MenuTab>)}
                <MenuRight>
                    <svg width="10" height="9" viewBox="0 0 10 9" fill="none" stroke="#444" strokeWidth="1.1"><path d="M1 5l4-4 4 4M2.5 7.5l2.5-2.5 2.5 2.5z" /></svg>
                    <FindBox>Find a command<Glass s={13} /></FindBox>
                    <svg width="16" height="16" viewBox="0 0 16 16" fill="none"><circle cx="8" cy="8" r="5.5" stroke="#a3a7aa" strokeWidth="2.4" strokeDasharray="2.6 1.7" /><circle cx="8" cy="8" r="2.5" stroke="#a3a7aa" /></svg>
                    <Slot $w={16} $ml={13}>
                        <svg width="16" height="16" viewBox="0 0 16 16"><circle cx="8" cy="8" r="7.4" fill="#2462b8" stroke="#a6c3e4" /><text x="8" y="12" textAnchor="middle" fontSize="11" fontWeight="700" fontFamily="Liberation Sans" fill="#fff">?</text></svg>
                    </Slot>
                    <Slot $w={8} $ml={4}><Caret $c="#555" /></Slot>
                    <Slot $w={10} $ml={7}><svg width="9" height="9" viewBox="0 0 9 9"><path d="M1 7h7v2H1z" fill="#000" /></svg></Slot>
                    <Slot $w={12} $ml={5}><svg width="11" height="11" viewBox="0 0 11 11" fill="none" stroke="#000" strokeWidth="1.4"><rect x="1" y="4" width="6" height="6" /><path d="M4 3V1h6v6H8" /></svg></Slot>
                    <Slot $w={12} $ml={5}><CloseX c="#000" s={9} w={1.7} /></Slot>
                </MenuRight>
            </MenuRow>

            <Ribbon>
                {GROUPS.map(g => (
                    <RGroup key={g.label} $w={g.w} $pl={g.pl}>
                        <RItems>
                            {g.items.map(it => (
                                <RButton key={it.t.join(' ')} $w={it.w} $hot={it.hot}>
                                    <RIcon><it.I /></RIcon>
                                    {it.t.map((line, i) => (
                                        <RLine key={i}>
                                            {line}
                                            {it.caret && i === 1 && <Caret />}
                                        </RLine>
                                    ))}
                                </RButton>
                            ))}
                        </RItems>
                        <RLabel $pl={g.pl}>{g.label}</RLabel>
                    </RGroup>
                ))}
            </Ribbon>

            <Toolbar>
                <Grip />
                <HotButton $w={23} $ml={2}>
                    <svg width="18" height="18" viewBox="0 0 18 18"><path d="M2 2l9 9-4 .5-1 4.5z" fill="#1f8fd0" /><circle cx="12" cy="6" r="3.6" fill="#f8e25a" stroke="#caa432" strokeWidth=".6" /></svg>
                </HotButton>
                <Slot $w={23}><svg width="18" height="18" viewBox="0 0 18 18"><path d="M7 2h4v5h5v4h-5v5H7v-5H2V7h5z" fill="#8cbf4c" stroke="#6f9f3a" strokeWidth=".6" /></svg></Slot>
                <Slot $ml={1}><svg width="18" height="18" viewBox="0 0 18 18"><rect x="2" y="7" width="14" height="4" rx="1" fill="#d0343a" /></svg></Slot>
                <Slot $w={23}><svg width="18" height="18" viewBox="0 0 18 18" fill="none"><rect x="2" y="3" width="13" height="13" stroke="#3d8fb5" strokeDasharray="2 1.5" /><path d="M9 6v8M5 10h8M14 0v6M11 3h6" stroke={RED} strokeWidth="1.2" /></svg></Slot>
                <Slot $w={10}><Caret /></Slot>
                <Slot $ml={3}><svg width="18" height="18" viewBox="0 0 18 18" fill="none"><path d="M5 2h8l4 7-4 7H5L1 9z" stroke="#75a9c4" strokeDasharray="2 1.4" /></svg></Slot>
                <VBar $ml={2} $h={20} />
                <Slot $ml={3}><svg width="20" height="20" viewBox="0 0 20 20"><rect x="1" y="8" width="4" height="11" fill="#d0343a" /><rect x="6" y="8" width="4" height="11" fill="#3ca04a" /><rect x="11" y="6" width="4" height="13" fill="#2462b8" /><path d="M9 1h10l-4 5v3h-2V6z" fill="#2f9fd0" /></svg></Slot>
                <Select $w={96} $ml={1}>All<Caret $s={3} /></Select>
                <HotButton $w={22} $ml={2}>
                    <svg width="18" height="18" viewBox="0 0 18 18"><path d="M1 5l8-4 8 4v8l-8 4-8-4z" fill="#2f9fd0" /><path d="M9 3l6 3-6 8-4-4z" fill="#f6cf3a" /></svg>
                </HotButton>
                <Select $w={122} $ml={3} $off>Part Only<Caret $c="#b5b8bb" /></Select>
                <Slot $ml={7}>{GREY_ICONS.link}</Slot>
                <Slot $ml={1}>{GREY_ICONS.stamp}</Slot>
                <VBar $ml={3} $h={20} />
                <Slot $ml={4}>{GREY_ICONS.list1}</Slot>
                <Slot>{GREY_ICONS.list2}</Slot>
                <Slot>{GREY_ICONS.list1}</Slot>
                <Slot>{GREY_ICONS.list1}</Slot>
                <Slot>{GREY_ICONS.cursor}</Slot>
                <Slot>{GREY_ICONS.stack}</Slot>
                <Slot>{GREY_ICONS.card}</Slot>
                <Slot>{GREY_ICONS.globe}</Slot>
                <VBar $ml={2} $h={20} />
                <Slot $ml={3}>{GREY_ICONS.clock}</Slot>
                <Slot>{GREY_ICONS.hook}</Slot>
                <Slot>{GREY_ICONS.stop}</Slot>
                <Select $w={96} $ml={1} $off>Normal<Caret $c="#b5b8bb" /></Select>
                {['arrow', 'gear', 'play', 'points', 'lineA', 'lineB', 'circleDot', 'circlePts', 'wave', 'wave2', 'arch', 'lineC', 'solidA', 'solidB'].map(k => (
                    <Slot key={k}>{GREY_ICONS[k]}</Slot>
                ))}
            </Toolbar>

            <Workspace>
                <LeftDock>
                    <DockHead><span>Manager</span><DockGlyphs /></DockHead>
                    <DockBody $pl={3}>
                        <Rail>
                            <RailTab $active $side="left">
                                <svg width="24" height="24" viewBox="0 0 24 24" fill="none">
                                    <path d="M1 5l6-3 6 3v7l-6 3-6-3z" fill="#bfe3f0" stroke="#5aa8c8" strokeWidth=".8" />
                                    <path d="M1 5l6 3 6-3M7 8v7" stroke="#5aa8c8" strokeWidth=".8" />
                                    <path d="M14 9h8M11 15v7M11 18h7" stroke="#8a9095" />
                                    <rect x="18" y="15.5" width="5" height="5" stroke="#8a9095" />
                                </svg>
                            </RailTab>
                            <RailTab $h={52}>
                                <svg width="24" height="24" viewBox="0 0 24 24"><rect x="1" y="1" width="22" height="22" fill="#dff1f8" stroke="#4f9cc0" /><path d="M1 1h22v4H1z" fill="#4f9cc0" /><path d="M12 7l7 3v7l-7 4-7-4v-7z" fill="#f6c23a" stroke="#c98a17" strokeWidth=".7" /><path d="M5 10l7 3 7-3M12 13v8" stroke="#c98a17" strokeWidth=".7" fill="none" /></svg>
                            </RailTab>
                            <RailTab $h={46}>
                                <svg width="24" height="24" viewBox="0 0 24 24"><rect x="0" y="1" width="24" height="23" fill="#a9dbef" /><circle cx="17" cy="6" r="4" fill="#f3b83a" /><path d="M0 14c4-6 8-6 12-1s8 3 12-1v12H0z" fill="#4fa9cc" /><path d="M1 16h11v-3l6 5-6 5v-3H1z" fill="#ea7d2e" /></svg>
                            </RailTab>
                            <RailTab $h={48}>
                                <svg width="24" height="24" viewBox="0 0 24 24"><circle cx="15" cy="7" r="5" fill="#f6b93a" /><path d="M7 20c1-6 14-7 16 2H9z" fill="#f6b93a" /><circle cx="9" cy="9" r="5" fill="#3f9fc6" /><path d="M0 23c1-8 16-8 18 0z" fill="#3f9fc6" /></svg>
                            </RailTab>
                        </Rail>
                        <Panel>
                            <FilterRow>
                                <Select $w={131} $h={23}>Show Most<Caret $s={3} /></Select>
                                <Select $w={116} $h={23} />
                                <FilterBtn>
                                    <svg width="18" height="18" viewBox="0 0 18 18"><path d="M1 2h16l-6 7v7H7V9z" fill="#2fa4c9" /></svg>
                                </FilterBtn>
                            </FilterRow>
                            <TreeHead><HeadCell>Feature Node</HeadCell></TreeHead>
                            <TreeBody>
                                <TreeRow $pl={3} $line $gap={5}>
                                    <Chevron open />
                                    <svg width="16" height="14" viewBox="0 0 16 14"><rect x="5" y="1" width="6" height="4" fill="#3a8db3" /><rect x="1" y="9" width="5" height="4" fill="#3a8db3" /><rect x="10" y="9" width="5" height="4" fill="#3a8db3" /><path d="M8 5v2M3.5 9V7h9v2" stroke="#3a8db3" fill="none" /></svg>
                                    Part001
                                </TreeRow>
                                <TreeRow $pl={18} $line $gap={5}>
                                    <Chevron c="#999" />
                                    <Folder />
                                    Block(1)
                                </TreeRow>
                                <TreeRow $pl={18} $line $gap={5}>
                                    <Chevron open />
                                    <Folder open />
                                    History
                                </TreeRow>
                                <TreeRow $pl={46} $line $gap={5}>
                                    <svg width="13" height="13" viewBox="0 0 13 13" fill="none"><rect x=".5" y=".5" width="12" height="12" fill="#fff" stroke="#111" /><path d="M3 6.5l2.5 3L10 3.5" stroke="#2aa52a" strokeWidth="1.6" /></svg>
                                    <svg width="16" height="16" viewBox="0 0 16 16" fill="none"><path d="M7 9V2" stroke="#3a8db3" /><path d="M7 9l7 2" stroke="#d8323c" /><path d="M7 9l-5 3" stroke="#5fae5f" /><path d="M1 6h14" stroke="#d8a0a0" /></svg>
                                    Default CSYS
                                </TreeRow>
                                <TreeRow $pl={46} $line $gap={4} $c="#ee1c25" $ls={0.35}>
                                    <svg width="16" height="12" viewBox="0 0 16 12"><path d="M0 6l7-6v3h9v6H7v3z" fill="#e8193c" /></svg>
                                    ----- MODEL STOP HERE -----
                                </TreeRow>
                            </TreeBody>
                            <Replay><SideTri />Replay</Replay>
                        </Panel>
                    </DockBody>
                </LeftDock>

                <Center>
                    <TabStrip>
                        {DOC_TABS.map(t => (
                            <DocTab key={t.t} $w={t.w} $pl={t.pl} $pr={t.pr} $active={t.active}>
                                <span>{t.t}</span>
                                <CloseX />
                            </DocTab>
                        ))}
                        <TabNav>
                            <svg width="7" height="12" viewBox="0 0 7 12"><path d="M7 0v12L0 6z" fill="#000" /></svg>
                            <svg width="7" height="12" viewBox="0 0 7 12"><path d="M0 0v12l7-6z" fill="#9aa0a5" /></svg>
                            <Slot $w={12} $ml={6}><svg width="11" height="11" viewBox="0 0 11 11"><path d="M4.500 0h2v4.500H11v2H6.500V11h-2V6.500H0v-2h4.500z" fill="#9aa0a5" /></svg></Slot>
                            <Slot $w={12} $ml={4}><svg width="10" height="10" viewBox="0 0 10 10"><path d="M0 1h10v1.500H0z" fill="#9aa0a5" /><path d="M0 4h10L5 10z" fill="#9aa0a5" /></svg></Slot>
                        </TabNav>
                    </TabStrip>
                    <Viewport>
                        <Jaw />
                        <Hint>
                            You can set the hotkey in Customize Settings.<br />
                            Click "Help/Show Hints" to disable these hints.
                        </Hint>
                        <ViewTools>
                            {VIEW_TOOLS.map((v, i) => (
                                <ViewSlot key={i} $w={v.w}>{v.g}{v.c && <Caret $c="#555" />}</ViewSlot>
                            ))}
                            <LayerBox>
                                <svg width="14" height="18" viewBox="0 0 14 18" fill="none"><path d="M3 11C0 7 3 1 7 1s7 6 4 10l-1 3H4z" fill="#fff" stroke="#c9a227" /><path d="M5 16h4" stroke="#888" strokeWidth="2" /></svg>
                                <svg width="14" height="14" viewBox="0 0 14 14"><circle cx="7" cy="7" r="6" fill="#f8e23a" stroke="#b7a01c" /></svg>
                                <LayerName>Layer000</LayerName>
                                <Caret />
                            </LayerBox>
                        </ViewTools>
                        <Triad width="100" height="95" viewBox="0 0 100 95">
                            <path d="M50 53L38 20" stroke="#0a18c9" strokeWidth="5" />
                            <path d="M33 13l-1 11 11-4z" fill="#0010d8" />
                            <path d="M50 53L25 70" stroke="#2ee02e" strokeWidth="4" />
                            <path d="M13 78l8-12 7 9z" fill="#10d010" />
                            <path d="M50 53l24 8" stroke="#9c1010" strokeWidth="5" />
                            <circle cx="68" cy="60" r="3.5" fill="none" stroke="#ee1010" strokeWidth="2" />
                            <path d="M70 58l5 4-5 1z" fill="#400" />
                            <text x="26" y="12" fontSize="14" fill="#1722e0" fontFamily="Liberation Sans">Z</text>
                            <text x="77" y="71" fontSize="14" fill="#f02020" fontFamily="Liberation Sans">X</text>
                            <text x="2" y="89" fontSize="14" fill="#22e022" fontFamily="Liberation Sans">Y</text>
                        </Triad>
                        <Scale>78.0294 mm</Scale>
                    </Viewport>
                </Center>

                <RightDock>
                    <DockHead $pr={6} $pl={5}><span>File Browser</span><DockGlyphs /></DockHead>
                    <DockBody>
                        <RightPanel>
                            <NavRow>
                                <NavBtn><Arrow dir="left" /></NavBtn>
                                <NavBtn><Arrow dir="right" /></NavBtn>
                                <NavBtn><Arrow dir="up" /></NavBtn>
                                <NavBtn $on>
                                    <svg width="18" height="18" viewBox="0 0 18 18" fill="none" stroke="#1f8ab8" strokeWidth="2.2"><path d="M3 9a6 6 0 0110-4.500" /><path d="M15 9a6 6 0 01-10 4.500" /><path d="M12 1l3 4-4 1z" fill="#1f8ab8" stroke="none" /><path d="M6 17l-3-4 4-1z" fill="#1f8ab8" stroke="none" /></svg>
                                </NavBtn>
                            </NavRow>
                            <FileTree>
                                <TreeRow $w={290} $pl={2} $gap={4}>
                                    <Chevron c="#8a8a8a" />
                                    <svg width="16" height="16" viewBox="0 0 16 16"><path d="M8 0l2.400 5.400L16 6l-4.200 3.800L13 16l-5-3-5 3 1.200-6.200L0 6l5.600-.6z" fill="#20a8d8" /></svg>
                                    Favorites
                                </TreeRow>
                                <TreeRow $w={290} $pl={2} $gap={4}><Chevron c="#8a8a8a" /><Folder />System(C:)</TreeRow>
                                <TreeRow $w={290} $pl={2} $gap={4}><Chevron c="#8a8a8a" /><Folder />Work(D:)</TreeRow>
                                <TreeRow $w={290} $pl={2} $gap={4}><Chevron c="#8a8a8a" /><Folder />Documents(E:)</TreeRow>
                            </FileTree>
                            <Lower>
                                <LowerCol>
                                    <SectionHead><DownTri />Search</SectionHead>
                                    <SectionBody $h={33} $mb={3}>
                                        <SearchBox>Search...<Caret /></SearchBox>
                                        <SquareBtn><Glass s={16} /></SquareBtn>
                                        <SquareBtn>
                                            <svg width="16" height="16" viewBox="0 0 16 16" fill="none"><path d="M2 1l5 6" stroke="#8a8e91" strokeWidth="2" /><path d="M7 7l7 5M5 8l5 6" stroke={RED} strokeWidth="2" /></svg>
                                        </SquareBtn>
                                    </SectionBody>
                                    <SectionHead><DownTri />File List</SectionHead>
                                    <SectionBody $h={33}>
                                        <ViewPicker>
                                            <svg width="18" height="16" viewBox="0 0 18 16"><rect x="1" y="1" width="4" height="3" fill="#e8b42f" /><rect x="9" y="1" width="4" height="3" fill="#3a9cc4" /><rect x="1" y="6" width="4" height="3" fill="#3a9cc4" /><rect x="9" y="6" width="4" height="3" fill="#c9772a" /><rect x="1" y="11" width="4" height="3" fill="#c9202c" /><rect x="9" y="11" width="4" height="3" fill="#3a8db3" /><path d="M5 2h4M13 2h4M5 7h4M13 7h4M5 12h4M13 12h4" stroke="#888" /></svg>
                                            <Caret $s={4} $c="#000" />
                                        </ViewPicker>
                                        <Select $w={224} $h={25}>All Support Files<Caret /></Select>
                                    </SectionBody>
                                    <ListArea />
                                    <ObjectRow>
                                        <ObjectLabel>Object list</ObjectLabel>
                                        <ObjectSel><Caret /></ObjectSel>
                                    </ObjectRow>
                                </LowerCol>
                                <ScrollBar>
                                    <ScrollEnd $h={16}><UpTri /></ScrollEnd>
                                    <ScrollThumb><ThumbGrip /></ScrollThumb>
                                    <ScrollEnd $h={44}><DownBig /></ScrollEnd>
                                </ScrollBar>
                            </Lower>
                        </RightPanel>
                        <Rail>
                            <RailTab $active $side="right">
                                <svg width="25" height="22" viewBox="0 0 16 14"><path d="M1 2h5l1 2h8v9H1z" fill="url(#gFolder)" stroke="#d98f17" strokeWidth=".5" /></svg>
                            </RailTab>
                            <RailTab $h={52}>
                                <svg width="25" height="25" viewBox="0 0 25 25"><path d="M1 3h6l1 2h16v18H1z" fill="url(#gFolder)" stroke="#8a6a1c" strokeWidth=".8" /><path d="M4 20L20 6" stroke="#1f7fa8" strokeWidth="3.5" /><circle cx="6" cy="19" r="3" fill="#3a9cc4" /><circle cx="19" cy="7" r="3" fill="#3a9cc4" /></svg>
                            </RailTab>
                            <RailTab $h={46}>
                                <svg width="25" height="22" viewBox="0 0 25 22"><path d="M1 9l11-7 12 7-12 7z" fill="#4fb6a4" /><path d="M1 9v4l11 7 12-7V9l-12 7z" fill="#3a93a8" /></svg>
                            </RailTab>
                        </Rail>
                    </DockBody>
                </RightDock>
            </Workspace>

            <StatusBar>
                Select command or entity.
                <StatusIcons>
                    <StatusBtn $on><svg width="14" height="14" viewBox="0 0 14 14" fill="none" stroke="#3a7fa6"><rect x="1" y="1" width="12" height="12" fill="#fff" /><path d="M1 4h12M5 4v9" /></svg></StatusBtn>
                    <StatusBtn $on><svg width="14" height="14" viewBox="0 0 14 14"><rect x="1" y="2" width="12" height="8" fill="#3a9cc4" stroke="#1f6f96" /><path d="M4 12h6" stroke="#666" strokeWidth="2" /></svg></StatusBtn>
                    <StatusBtn><svg width="14" height="14" viewBox="0 0 14 14" fill="none" stroke="#3a7fa6"><rect x="1" y="2" width="12" height="10" fill="#eef6fa" /><path d="M1 5h12M1 8h12" /></svg></StatusBtn>
                </StatusIcons>
                <StatusField />
            </StatusBar>
        </Shell>
    );
}
